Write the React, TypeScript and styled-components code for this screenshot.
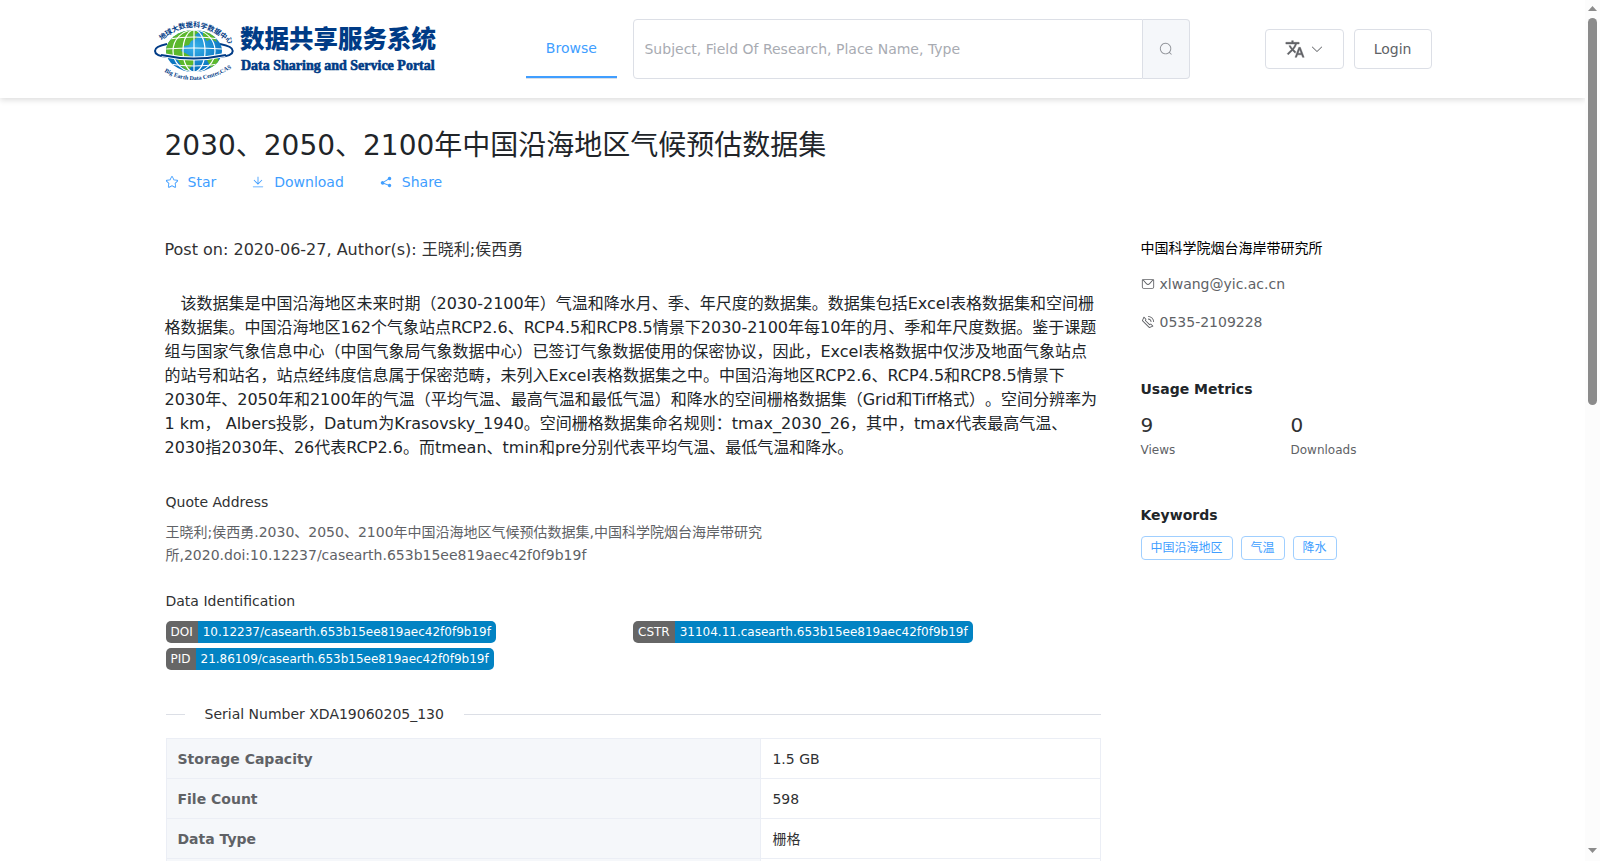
import React from "react";
import styled, { createGlobalStyle, css } from "styled-components";

const Global = createGlobalStyle`
  *, *::before, *::after { box-sizing: border-box; }
  body {
    margin: 0;
    background: #fff;
    color: #212529;
    font: 16px/24px "DejaVu Sans", "Noto Sans CJK SC", sans-serif;
    text-spacing-trim: space-all;
  }
  h1, h2, p, dl, dd, dt, ul { margin: 0; padding: 0; }
  button, input { font: inherit; }
`;

const Shell = styled.div`
  display: flex;
  height: 100vh;
`;
const Page = styled.div`
  flex: 1;
  min-width: 0;
  overflow-y: auto;
  scrollbar-width: none;
`;
const ScrollTrack = styled.div`
  flex: none;
  width: 15px;
  padding: 6px 3px 8px;
  display: flex;
  flex-direction: column;
  align-items: center;
  background: #fcfcfc;
`;
const ScrollArrow = styled.svg`
  width: 9px;
  height: 5px;
  fill: #8b8b8b;
`;
const ScrollThumb = styled.div`
  width: 9px;
  height: 45vh;
  margin: 7px 0 auto;
  border-radius: 5px;
  background: #8b8b8b;
`;

const Header = styled.header`
  box-shadow: 0 2px 6px rgba(0, 0, 0, 0.14);
`;
const HeaderInner = styled.div`
  max-width: 1280px;
  height: 98px;
  margin: 0 auto;
  display: grid;
  grid-template-columns: 7fr 2fr 15fr;
  align-items: center;
`;
const LogoLink = styled.a`
  display: block;
  line-height: 0;
`;
const Nav = styled.nav`
  display: flex;
  justify-self: start;
  border-bottom: 1px solid #dcdfe6;
`;
const NavLink = styled.a`
  height: 59px;
  padding: 0 20px;
  border-bottom: 2px solid #409eff;
  color: #409eff;
  font-size: 14px;
  line-height: 58px;
  text-decoration: none;
`;
const Tools = styled.div`
  display: flex;
  align-items: center;
  padding: 0 1px;
`;
const Search = styled.form`
  flex: 1;
  display: flex;
  height: 60px;
  margin-right: 75px;
`;
const SearchInput = styled.input`
  flex: 1;
  min-width: 0;
  padding: 0 10px;
  border: 1px solid #dcdfe6;
  border-radius: 4px 0 0 4px;
  outline: none;
  color: #606266;
  font-size: 14px;
  &::placeholder { color: #a8abb2; opacity: 1; }
`;
const SearchButton = styled.button`
  width: 47px;
  padding: 0;
  display: grid;
  place-items: center;
  border: 1px solid #dcdfe6;
  border-left: 0;
  border-radius: 0 4px 4px 0;
  background: #f5f7fa;
  color: #909399;
`;
const Button = styled.button`
  height: 40px;
  padding: 0 19px;
  display: flex;
  align-items: center;
  gap: 5px;
  border: 1px solid #dcdfe6;
  border-radius: 4px;
  background: #fff;
  color: #606266;
  font-size: 14px;
  & + & { margin-left: 10px; }
`;

const Icon = styled.svg<{ $size?: number }>`
  flex: none;
  width: ${(p) => p.$size ?? 14}px;
  height: ${(p) => p.$size ?? 14}px;
  fill: currentColor;
`;

const Container = styled.main`
  max-width: 1280px;
  margin: 0 auto;
  padding: 30px 12px 0;
`;
const Title = styled.h1`
  font-size: 28px;
  font-weight: 400;
  line-height: 36px;
`;
const Actions = styled.div`
  display: flex;
  gap: 35px;
  margin-top: 6px;
`;
const Action = styled.button`
  display: flex;
  align-items: center;
  gap: 9px;
  padding: 0;
  border: 0;
  background: none;
  color: #409eff;
  font-size: 14px;
  line-height: 24px;
`;
const Columns = styled.div`
  display: flex;
  margin-top: 44px;
`;
const Article = styled.article`
  flex: 0 0 75%;
  max-width: 936px;
  min-width: 0;
`;
const PostInfo = styled.p`
  color: #303133;
`;
const Description = styled.p`
  margin-top: 30px;
  text-indent: 16px;
`;
const Details = styled.div`
  padding: 8px 0 0 1px;
`;
const SectionLabel = styled.h2`
  margin-top: 23px;
  color: #303133;
  font-size: 14px;
  font-weight: 400;
  line-height: 22px;
`;
const Quote = styled.p`
  max-width: 624px;
  margin-top: 8px;
  color: #606266;
  font-size: 14px;
  line-height: 23px;
`;
const Badges = styled.div`
  display: grid;
  grid-template-columns: 1fr 1fr;
  gap: 5px 0;
  margin-top: 9px;
`;
const Badge = styled.a`
  justify-self: start;
  display: flex;
  overflow: hidden;
  border-radius: 5px;
  color: #fff;
  font-size: 12px;
  line-height: 22px;
  text-decoration: none;
`;
const BadgePart = styled.span<{ $value?: boolean }>`
  padding: 0 5px;
  background: ${(p) => (p.$value ? "#0283c3" : "#666")};
`;
const Divider = styled.div`
  display: flex;
  align-items: center;
  gap: 20px;
  margin-top: 32px;
  color: #303133;
  font-size: 14px;
  &::before, &::after {
    content: "";
    width: 19px;
    height: 1px;
    background: #dcdfe6;
  }
  &::after { flex: 1; }
`;
const Table = styled.table`
  width: 100%;
  margin-top: 12px;
  border-collapse: collapse;
  table-layout: fixed;
  font-size: 14px;
`;
const cell = css`
  height: 40px;
  padding: 0 11px;
  border: 1px solid #ebeef5;
  text-align: left;
`;
const HeadCell = styled.th`
  ${cell}
  width: 63.7%;
  background: #f5f7fa;
  color: #606266;
`;
const Cell = styled.td`
  ${cell}
  color: #303133;
`;

const Aside = styled.aside`
  flex: 1;
  min-width: 0;
  margin-left: 40px;
  font-size: 14px;
`;
const Institute = styled.p`
  color: #000;
  line-height: 20px;
`;
const Contact = styled.a`
  display: flex;
  align-items: center;
  gap: 5px;
  margin-top: 14px;
  color: #606266;
  text-decoration: none;
`;
const AsideTitle = styled.h2`
  margin-top: 44px;
  font-size: 14px;
  line-height: 22px;
`;
const Metrics = styled.dl`
  display: flex;
  margin-top: 10px;
`;
const Metric = styled.div`
  flex: none;
  display: flex;
  flex-direction: column-reverse;
  width: 150px;
`;
const MetricLabel = styled.dt`
  color: #606266;
  font-size: 12px;
  line-height: 20px;
`;
const MetricValue = styled.dd`
  color: #303133;
  font-size: 20px;
  line-height: 30px;
`;
const Tags = styled.ul`
  display: flex;
  flex-wrap: wrap;
  gap: 8px;
  margin-top: 10px;
  list-style: none;
`;
const Tag = styled.li`
  height: 24px;
  padding: 0 9px;
  border: 1px solid #a0cfff;
  border-radius: 4px;
  color: #409eff;
  font-size: 12px;
  line-height: 22px;
`;

const paths = {
  search:
    "m795.904 750.72 124.992 124.928a32 32 0 0 1-45.248 45.248L750.656 795.904a416 416 0 1 1 45.248-45.248zM480 832a352 352 0 1 0 0-704 352 352 0 0 0 0 704z",
  arrowDown:
    "M831.872 340.864 512 652.672 192.128 340.864a30.592 30.592 0 0 0-42.752 0 29.12 29.12 0 0 0 0 41.6L489.664 714.24a32 32 0 0 0 44.672 0l340.288-331.712a29.12 29.12 0 0 0 0-41.728 30.592 30.592 0 0 0-42.752 0z",
  star: "m512 747.84 228.16 119.936a6.4 6.4 0 0 0 9.28-6.72l-43.52-254.08 184.512-179.904a6.4 6.4 0 0 0-3.52-10.88l-255.104-37.12L517.76 147.904a6.4 6.4 0 0 0-11.52 0L392.192 379.072l-255.104 37.12a6.4 6.4 0 0 0-3.52 10.88L318.08 606.976l-43.584 254.08a6.4 6.4 0 0 0 9.28 6.72L512 747.84zM313.6 924.48a70.4 70.4 0 0 1-102.144-74.24l37.888-220.928L88.96 472.96A70.4 70.4 0 0 1 128 352.896l221.76-32.256 99.2-200.96a70.4 70.4 0 0 1 126.208 0l99.2 200.96 221.824 32.256a70.4 70.4 0 0 1 39.04 120.064L774.72 629.376l37.888 220.928a70.4 70.4 0 0 1-102.144 74.24L512 820.096l-198.4 104.32z",
  download:
    "M160 832h704a32 32 0 1 1 0 64H160a32 32 0 1 1 0-64zm384-253.696 236.288-236.352 45.248 45.248L508.8 704 192 387.2l45.248-45.248L480 584.704V128h64v450.304z",
  share:
    "m679.872 348.8-301.76 188.608a127.808 127.808 0 0 1 5.12 52.16l279.936 104.96a128 128 0 1 1-22.464 59.904l-279.872-104.96a128 128 0 1 1-16.64-166.272l301.696-188.608a128 128 0 1 1 33.92 54.272z",
  message:
    "M128 224v512a64 64 0 0 0 64 64h640a64 64 0 0 0 64-64V224H128zm0-64h768a64 64 0 0 1 64 64v512a128 128 0 0 1-128 128H192A128 128 0 0 1 64 736V224a64 64 0 0 1 64-64zM904 224 656.512 506.88a192 192 0 0 1-289.024 0L120 224h784zm-698.944 0 210.56 240.704a128 128 0 0 0 192.704 0L818.944 224H205.056z",
  phone:
    "M79.36 432.256 591.744 944.64a32 32 0 0 0 35.2 6.784l253.44-108.544a32 32 0 0 0 9.984-52.032l-153.856-153.92a32 32 0 0 0-36.928-6.016l-69.888 34.944L358.08 394.24l35.008-69.888a32 32 0 0 0-5.952-36.928L233.152 133.568a32 32 0 0 0-52.032 10.048L72.512 397.056a32 32 0 0 0 6.784 35.2zm60.48-29.952 81.536-190.08L325.568 316.48l-24.64 49.216-20.608 41.216 32.576 32.64 271.552 271.552 32.64 32.64 41.216-20.672 49.28-24.576 104.192 104.128-190.08 81.472L139.84 402.304zM512 320v-64a256 256 0 0 1 256 256h-64a192 192 0 0 0-192-192zm0-192V64a448 448 0 0 1 448 448h-64a384 384 0 0 0-384-384z",
};

const Glyph = ({ name, size }: { name: keyof typeof paths; size?: number }) => (
  <Icon viewBox="0 0 1024 1024" $size={size} aria-hidden="true">
    <path d={paths[name]} />
  </Icon>
);

const Logo = () => (
  <svg width="288" height="70" viewBox="0 0 288 70" role="img" aria-label="数据共享服务系统 Data Sharing and Service Portal">
    <defs>
      <radialGradient id="sea" cx="50%" cy="40%" r="65%">
        <stop offset="0" stopColor="#37b1ea" />
        <stop offset="1" stopColor="#0068b7" />
      </radialGradient>
      <clipPath id="sphere">
        <ellipse cx="41" cy="37" rx="28" ry="21" />
      </clipPath>
      <path id="arcTop" d="M7 28 Q41 -3 78 31" />
      <path id="arcBottom" d="M7 55 Q41 78 80 53" />
    </defs>
    <path d="M14 30 C-2 33 -2 41 14 43 M67 30 C84 33 84 41 67 43" fill="none" stroke="#003b86" strokeWidth="2" />
    <ellipse cx="41" cy="37" rx="28" ry="21" fill="url(#sea)" />
    <g clipPath="url(#sphere)">
      <path fill="#5cb82c" d="M12 36 L14 26 L24 19 L38 15 L46 18 L42 21 L44 24 L38 27 L36 31 L31 32 L28 37 L34 40 L40 44 L41 49 L35 57 L29 53 L25 46 L18 42 L12 43 Z M50 17 L60 20 L64 28 L58 25 L54 27 L50 22 Z M54 46 L64 43 L67 49 L58 54 Z" />
      <g fill="none" stroke="#fff" strokeWidth="1.200">
        <path d="M41 16 V58" />
        <ellipse cx="41" cy="37" rx="11" ry="21" />
        <ellipse cx="41" cy="37" rx="21" ry="21" />
        <path d="M16 25 Q41 21 66 25 M13 35 Q41 33 69 35 M16 50 Q41 54 66 50" />
      </g>
    </g>
    <path d="M9 41 Q41 48 72 41" fill="none" stroke="#fff" strokeWidth="4" />
    <path d="M8 41 Q41 48 73 41" fill="none" stroke="#003b86" strokeWidth="2" />
    <g fill="#003b86" fontWeight="700">
      <text fontFamily="'Noto Sans CJK SC', sans-serif" fontSize="7">
        <textPath href="#arcTop" startOffset="2">地球大数据科学数据中心</textPath>
      </text>
      <text fontFamily="'Liberation Serif', serif" fontSize="6">
        <textPath href="#arcBottom" startOffset="5">Big Earth Data Center,CAS</textPath>
      </text>
      <text x="87" y="34" fontFamily="'Noto Sans CJK SC', sans-serif" fontSize="24.500" fontWeight="900">
        数据共享服务系统
      </text>
      <text x="88" y="56" fontFamily="'Liberation Serif', serif" fontSize="14" stroke="#003b86" strokeWidth="0.600">
        Data Sharing and Service Portal
      </text>
    </g>
  </svg>
);

const identifiers = [
  ["DOI", "10.12237/casearth.653b15ee819aec42f0f9b19f"],
  ["CSTR", "31104.11.casearth.653b15ee819aec42f0f9b19f"],
  ["PID", "21.86109/casearth.653b15ee819aec42f0f9b19f"],
];
const rows = [
  ["Storage Capacity", "1.5 GB"],
  ["File Count", "598"],
  ["Data Type", "栅格"],
  ["", ""],
];

export default function App() {
  return (
    <>
      <Global />
      <Shell lang="zh-CN">
        <Page>
          <Header>
            <HeaderInner>
              <LogoLink href="#">
                <Logo />
              </LogoLink>
              <Nav>
                <NavLink href="#">Browse</NavLink>
              </Nav>
              <Tools>
                <Search onSubmit={(e) => e.preventDefault()}>
                  <SearchInput
                    type="text"
                    aria-label="Search"
                    placeholder="Subject, Field Of Research, Place Name, Type"
                  />
                  <SearchButton type="submit" aria-label="Search">
                    <Glyph name="search" />
                  </SearchButton>
                </Search>
                <Button type="button" aria-label="Language">
                  <Icon viewBox="0 0 24 24" $size={20} stroke="currentColor" strokeWidth="0.500" aria-hidden="true">
                    <path d="m12.87 15.07-2.54-2.51.03-.03A17.52 17.52 0 0 0 14.07 6H17V4h-7V2H8v2H1v1.99h11.17C11.5 7.92 10.44 9.75 9 11.35 8.07 10.32 7.3 9.19 6.69 8h-2c.73 1.63 1.73 3.17 2.98 4.56l-5.09 5.02L4 19l5-5 3.11 3.11.76-2.04zM18.5 10h-2L12 22h2l1.12-3h4.75L21 22h2l-4.5-12zm-2.62 7 1.62-4.33L19.12 17h-3.24z" />
                  </Icon>
                  <Glyph name="arrowDown" />
                </Button>
                <Button type="button">Login</Button>
              </Tools>
            </HeaderInner>
          </Header>
          <Container>
            <Title>2030、2050、2100年中国沿海地区气候预估数据集</Title>
            <Actions>
              <Action type="button"><Glyph name="star" />Star</Action>
              <Action type="button"><Glyph name="download" />Download</Action>
              <Action type="button"><Glyph name="share" />Share</Action>
            </Actions>
            <Columns>
              <Article>
                <PostInfo>Post on: 2020-06-27, Author(s): 王晓利;侯西勇</PostInfo>
                <Description>
                  该数据集是中国沿海地区未来时期（2030-2100年）气温和降水月、季、年尺度的数据集。数据集包括Excel表格数据集和空间栅格数据集。中国沿海地区162个气象站点RCP2.6、RCP4.5和RCP8.5情景下2030-2100年每10年的月、季和年尺度数据。鉴于课题组与国家气象信息中心（中国气象局气象数据中心）已签订气象数据使用的保密协议，因此，Excel表格数据中仅涉及地面气象站点的站号和站名，站点经纬度信息属于保密范畴，未列入Excel表格数据集之中。中国沿海地区RCP2.6、RCP4.5和RCP8.5情景下2030年、2050年和2100年的气温（平均气温、最高气温和最低气温）和降水的空间栅格数据集（Grid和Tiff格式）。空间分辨率为1 km， Albers投影，Datum为Krasovsky_1940。空间栅格数据集命名规则：tmax_2030_26，其中，tmax代表最高气温、2030指2030年、26代表RCP2.6。而tmean、tmin和pre分别代表平均气温、最低气温和降水。
                </Description>
                <Details>
                  <SectionLabel>Quote Address</SectionLabel>
                  <Quote>
                    王晓利;侯西勇.2030、2050、2100年中国沿海地区气候预估数据集,中国科学院烟台海岸带研究所,2020.doi:10.12237/casearth.653b15ee819aec42f0f9b19f
                  </Quote>
                  <SectionLabel>Data Identification</SectionLabel>
                  <Badges>
                    {identifiers.map(([kind, value]) => (
                      <Badge key={kind} href="#">
                        <BadgePart>{kind}</BadgePart>
                        <BadgePart $value>{value}</BadgePart>
                      </Badge>
                    ))}
                  </Badges>
                  <Divider>Serial Number XDA19060205_130</Divider>
                  <Table>
                    <tbody>
                      {rows.map(([label, value]) => (
                        <tr key={label}>
                          <HeadCell scope="row">{label}</HeadCell>
                          <Cell>{value}</Cell>
                        </tr>
                      ))}
                    </tbody>
                  </Table>
                </Details>
              </Article>
              <Aside>
                <Institute>中国科学院烟台海岸带研究所</Institute>
                <Contact href="mailto:xlwang@yic.ac.cn"><Glyph name="message" />xlwang@yic.ac.cn</Contact>
                <Contact href="tel:0535-2109228"><Glyph name="phone" />0535-2109228</Contact>
                <AsideTitle>Usage Metrics</AsideTitle>
                <Metrics>
                  <Metric><MetricLabel>Views</MetricLabel><MetricValue>9</MetricValue></Metric>
                  <Metric><MetricLabel>Downloads</MetricLabel><MetricValue>0</MetricValue></Metric>
                </Metrics>
                <AsideTitle>Keywords</AsideTitle>
                <Tags>
                  <Tag>中国沿海地区</Tag>
                  <Tag>气温</Tag>
                  <Tag>降水</Tag>
                </Tags>
              </Aside>
            </Columns>
          </Container>
        </Page>
        <ScrollTrack aria-hidden="true">
          <ScrollArrow viewBox="0 0 9 5"><path d="M0 5 L4.500 0 L9 5 Z" /></ScrollArrow>
          <ScrollThumb />
          <ScrollArrow viewBox="0 0 9 5"><path d="M0 0 L4.500 5 L9 0 Z" /></ScrollArrow>
        </ScrollTrack>
      </Shell>
    </>
  );
}
